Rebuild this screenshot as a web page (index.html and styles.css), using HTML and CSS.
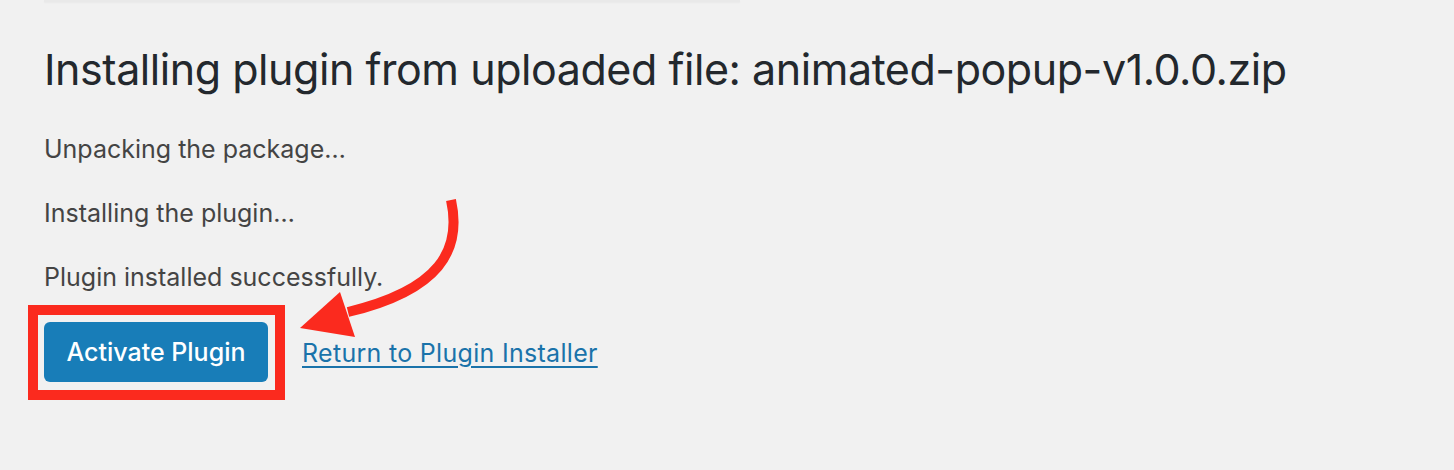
FILE: index.html
```html
<!DOCTYPE html>
<html lang="en">
<head>
<meta charset="utf-8">
<title>Installing plugin</title>
<link rel="stylesheet" href="styles.css">
</head>
<body>
<div class="wrap">
  <div class="topcard"></div>
  <h1 class="title">Installing plugin from uploaded file: animated-popup-v1.0.0.zip</h1>
  <p class="step">Unpacking the package…</p>
  <p class="step">Installing the plugin…</p>
  <p class="step">Plugin installed successfully.</p>
  <div class="actions">
    <span class="highlight"><a class="button" href="#">Activate Plugin</a></span>
    <a class="link" href="#">Return to Plugin Installer</a>
  </div>
</div>
<svg class="arrow" width="1454" height="470" viewBox="0 0 1454 470">
  <path d="M451 200 C 462 250, 440 290, 348 312" fill="none" stroke="#fb2a1e" stroke-width="10" stroke-linecap="butt"/>
  <polygon points="300,328 340,292 355,337" fill="#fb2a1e"/>
</svg>
</body>
</html>
```
FILE: styles.css
```css
html, body {
  margin: 0;
  padding: 0;
  background: #f1f1f1;
}
body {
  width: 1454px;
  height: 470px;
  overflow: hidden;
  position: relative;
  font-family: Inter, "Liberation Sans", sans-serif;
}
.wrap {
  padding-left: 44px;
}
.topcard {
  margin-left: 0;
  width: 696px;
  height: 2px;
  background: #e9e9e9;
  box-shadow: 0 1px 2px rgba(0,0,0,0.04);
}
.title {
  margin: 0;
  padding-top: 40px;
  font-size: 43px;
  font-weight: 400;
  line-height: 54px;
  color: #23282d;
  letter-spacing: -0.45px;
}
.step {
  margin: 0;
  font-size: 25px;
  line-height: 30px;
  color: #444444;
  margin-top: 34px;
}
.step:first-of-type {
  margin-top: 38px;
}
.actions {
  display: flex;
  align-items: center;
  margin-top: 13px;
  margin-left: -16px;
}
.highlight {
  display: inline-block;
  border: 10px solid #fb2a1e;
  padding: 7px 7px 8px 6px;
}
.button {
  display: block;
  width: 224px;
  height: 60px;
  box-sizing: border-box;
  background: #187db8;
  color: #ffffff;
  border-radius: 6px;
  text-decoration: none;
  font-size: 25px;
  font-weight: 500;
  line-height: 60px;
  text-align: center;
}
.link {
  margin-left: 17px;
  color: #1a73aa;
  font-size: 25px;
  letter-spacing: 0.3px;
  text-decoration: underline;
  text-underline-offset: 4px;
  text-decoration-thickness: 2px;
}
.arrow {
  position: absolute;
  left: 0;
  top: 0;
  pointer-events: none;
}
```
